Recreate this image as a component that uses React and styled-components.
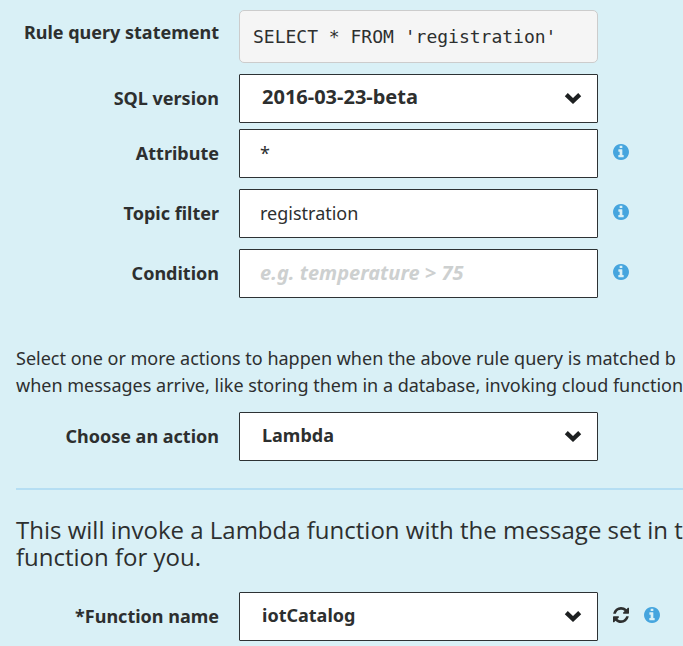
import React, { useState } from 'react';
import styled, { createGlobalStyle } from 'styled-components';

const GlobalStyle = createGlobalStyle`
  * {
    box-sizing: border-box;
  }
  body {
    margin: 0;
    background: #d9f0f6;
    color: #2d2f2f;
    font-family: 'Noto Sans', 'Open Sans', sans-serif;
    overflow-x: hidden;
  }
`;

const InfoIcon = () => (
  <Icon viewBox="0 0 1536 1536" aria-hidden="true">
    <path d="M1024 1248v-160q0-14-9-23t-23-9h-96v-512q0-14-9-23t-23-9h-320q-14 0-23 9t-9 23v160q0 14 9 23t23 9h96v320h-96q-14 0-23 9t-9 23v160q0 14 9 23t23 9h448q14 0 23-9t9-23zm-128-896v-160q0-14-9-23t-23-9h-192q-14 0-23 9t-9 23v160q0 14 9 23t23 9h192q14 0 23-9t9-23zm640 416q0 209-103 385.5t-279.5 279.5-385.5 103-385.5-103-279.5-279.5-103-385.5 103-385.5 279.5-279.5 385.5-103 385.5 103 279.5 279.5 103 385.5z" />
  </Icon>
);

const RefreshIcon = () => (
  <Icon viewBox="0 0 1536 1536" aria-hidden="true">
    <path d="M1511 928q0 5-1 7-64 268-268 434.5t-478 166.5q-146 0-282.5-55t-243.5-157l-129 129q-19 19-45 19t-45-19-19-45v-448q0-26 19-45t45-19h448q26 0 45 19t19 45-19 45l-137 137q71 66 161 102t187 36q134 0 250-65t186-179q11-17 53-117 8-23 30-23h192q13 0 22.5 9.5t9.5 22.5zm25-800v448q0 26-19 45t-45 19h-448q-26 0-45-19t-19-45 19-45l138-138q-148-137-349-137-134 0-250 65t-186 179q-11 17-53 117-8 23-30 23h-199q-13 0-22.5-9.5t-9.5-22.5v-7q65-268 270-434.5t480-166.5q146 0 284 55.5t245 156.5l130-129q19-19 45-19t45 19 19 45z" />
  </Icon>
);

function SelectField({ id, options, large }) {
  const [value, setValue] = useState(options[0]);

  return (
    <SelectBox>
      <Select id={id} $large={large} value={value} onChange={e => setValue(e.target.value)}>
        {options.map(o => <option key={o}>{o}</option>)}
      </Select>
      <Chevron viewBox="0 0 18 12" aria-hidden="true">
        <path d="M2.3 2.7L9 9L15.7 2.7" />
      </Chevron>
    </SelectBox>
  );
}

function App() {
  const [attribute, setAttribute] = useState('*');
  const [topic, setTopic] = useState('registration');
  const [condition, setCondition] = useState('');

  return (
    <Page>
      <GlobalStyle />
      <Row $top>
        <Label as="span">Rule query statement</Label>
        <Query>SELECT * FROM 'registration'</Query>
      </Row>
      <Row $gap={11}>
        <Label htmlFor="version">SQL version</Label>
        <SelectField id="version" large options={['2016-03-23-beta', '2015-10-08']} />
      </Row>
      <Row $gap={6}>
        <Label htmlFor="attribute">Attribute</Label>
        <Input id="attribute" value={attribute} onChange={e => setAttribute(e.target.value)} />
        <Actions>
          <IconButton type="button" aria-label="About attribute"><InfoIcon /></IconButton>
        </Actions>
      </Row>
      <Row $gap={11}>
        <Label htmlFor="topic">Topic filter</Label>
        <Input id="topic" value={topic} onChange={e => setTopic(e.target.value)} />
        <Actions>
          <IconButton type="button" aria-label="About topic filter"><InfoIcon /></IconButton>
        </Actions>
      </Row>
      <Row $gap={11}>
        <Label htmlFor="condition">Condition</Label>
        <Input
          id="condition"
          placeholder="e.g. temperature > 75"
          value={condition}
          onChange={e => setCondition(e.target.value)}
        />
        <Actions>
          <IconButton type="button" aria-label="About condition"><InfoIcon /></IconButton>
        </Actions>
      </Row>

      <Text>
        Select one or more actions to happen when the above rule query is matched b<br />
        when messages arrive, like storing them in a database, invoking cloud functions
      </Text>

      <Row>
        <Label htmlFor="action">Choose an action</Label>
        <SelectField id="action" options={['Lambda', 'DynamoDB', 'S3']} />
      </Row>

      <Divider />

      <Heading>
        This will invoke a Lambda function with the message set in the<br />
        function for you.
      </Heading>

      <Row>
        <Label htmlFor="function">*Function name</Label>
        <SelectField id="function" options={['iotCatalog']} />
        <Actions>
          <IconButton type="button" $dark aria-label="Refresh functions"><RefreshIcon /></IconButton>
          <IconButton type="button" aria-label="About function name"><InfoIcon /></IconButton>
        </Actions>
      </Row>
    </Page>
  );
}

export default App;

const Page = styled.main`
  padding: 10px 0 6px 16px;
  overflow: hidden;
`;

const Row = styled.div`
  display: grid;
  grid-template-columns: 203px minmax(160px, 359px) 1fr;
  column-gap: 20px;
  align-items: ${props => (props.$top ? 'start' : 'center')};
  margin-top: ${props => props.$gap || 0}px;
`;

const Label = styled.label`
  padding: 10px 0 12px;
  font-size: 18px;
  line-height: 24px;
  font-weight: 700;
  text-align: right;
  white-space: nowrap;
`;

const Query = styled.code`
  display: block;
  height: 53px;
  padding: 0 13px;
  border: 1px solid #ccc;
  border-radius: 5px;
  background: #f5f5f5;
  font-family: 'DejaVu Sans Mono', monospace;
  font-size: 18px;
  line-height: 51px;
  white-space: nowrap;
  overflow: hidden;
`;

const Input = styled.input`
  width: 100%;
  height: 49px;
  padding: 0 20px 2px;
  border: 1px solid #2d3234;
  border-radius: 1px;
  background: #fff;
  color: inherit;
  font-family: inherit;
  font-size: 18px;

  &::placeholder {
    color: #cdd0d0;
    font-size: 20px;
    font-weight: 700;
    font-style: italic;
    opacity: 1;
  }
`;

const SelectBox = styled.div`
  position: relative;
`;

const Select = styled.select`
  display: block;
  width: 100%;
  height: 49px;
  padding: 0 44px 4px 22px;
  appearance: none;
  border: 1px solid #2d3234;
  border-radius: 1px;
  background: #fff;
  color: inherit;
  font-family: inherit;
  font-size: ${props => (props.$large ? '20px' : '18px')};
  font-weight: 700;
`;

const Chevron = styled.svg`
  position: absolute;
  right: 16px;
  top: 18px;
  width: 18px;
  height: 12px;
  fill: none;
  stroke: #1d2021;
  stroke-width: 4.4;
  pointer-events: none;
`;

const Actions = styled.div`
  display: flex;
  gap: 15px;
  margin-left: -5px;
  padding-bottom: 4px;
`;

const IconButton = styled.button`
  display: flex;
  padding: 0;
  border: 0;
  background: none;
  color: ${props => (props.$dark ? '#2d2f2f' : '#45a5de')};
  cursor: pointer;
`;

const Icon = styled.svg`
  width: 16px;
  height: 16px;
  fill: currentColor;
`;

const Text = styled.p`
  margin: 47px 0 13px;
  font-size: 18px;
  line-height: 27px;
  white-space: nowrap;
`;

const Divider = styled.hr`
  margin: 27px 0 26px;
  border: 0;
  border-top: 2px solid #b5def3;
`;

const Heading = styled.h2`
  margin: 0 0 22px;
  font-family: 'Open Sans', sans-serif;
  font-size: 24px;
  line-height: 27px;
  font-weight: 400;
  white-space: nowrap;
`;
